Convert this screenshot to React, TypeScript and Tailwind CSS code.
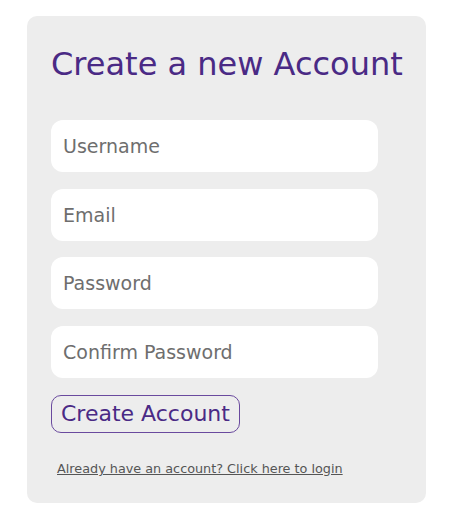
export default function App() {
  const fields = ['Username', 'Email', 'Password', 'Confirm Password'];

  return (
    <div className="min-h-[517px] bg-white pt-4 pl-[27px]" style={{ fontFamily: '"DejaVu Sans", Verdana, sans-serif' }}>
      <div className="w-[399px] rounded-[10px] bg-[#ededed] px-6 pt-[26px] pb-[25px]">
        <h1 className="whitespace-nowrap text-[32px] leading-[44px] font-normal text-[#4a2a85]">Create a new Account</h1>

        <form className="mt-[34px] flex flex-col gap-[16.5px]" onSubmit={(e) => e.preventDefault()}>
          {fields.map((name) => (
            <input
              key={name}
              type={name.includes('Password') ? 'password' : 'text'}
              placeholder={name}
              className="h-[52px] w-[327px] rounded-[12px] bg-white px-3 text-[19px] text-[#333] outline-none placeholder:text-[#6e6e6e]"
            />
          ))}

          <div className="mt-px">
            <button
              type="submit"
              className="rounded-[10px] border border-[#6a4a9e] bg-[#ededed] px-[9px] py-[4px] text-[22px] leading-[28px] text-[#4a2a85]"
            >
              Create Account
            </button>
          </div>
        </form>

        <a href="#" className="mt-[26px] ml-[6px] block text-[12.8px] text-[#555] underline">
          Already have an account? Click here to login
        </a>
      </div>
    </div>
  );
}
